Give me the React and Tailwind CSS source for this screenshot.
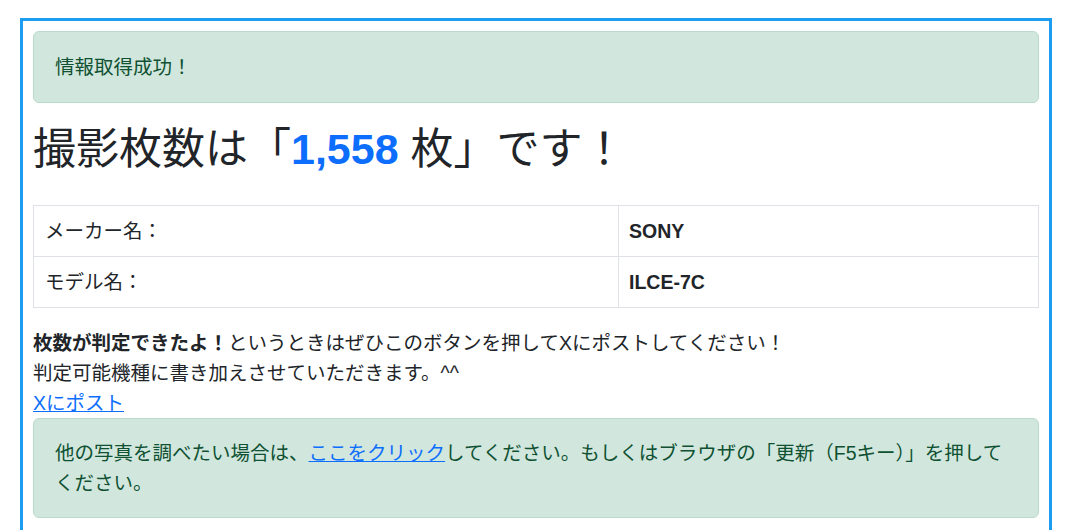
export default function App() {
  const font = { fontFamily: '"Liberation Sans", "Noto Sans CJK JP", sans-serif' };

  return (
    <div className="min-h-[530px] bg-white pl-[20px] pt-[18px] text-[19.5px] leading-[30px] text-[#212529]" style={font}>
      <div className="w-[1032px] border-[3px] border-[#1d9df0] px-[10px] pt-[10px] pb-[40px]">
        {/* success alert */}
        <div className="mb-[20px] rounded-[6px] border border-[#badbcc] bg-[#d1e7dd] px-[21px] py-[20px] text-[#0f5132]">
          情報取得成功！
        </div>

        <h1 className="mb-[29px] text-[43px] font-normal leading-[53px] text-[#212529]">
          撮影枚数は「<span className="font-bold text-[#0d6efd]">1,558</span> 枚」です！
        </h1>

        <table className="mb-[20px] w-full border-collapse border border-[#dee2e6]">
          <tbody>
            <tr>
              <td className="w-[585px] border border-[#dee2e6] px-[11px] py-[10px]">メーカー名：</td>
              <td className="border border-[#dee2e6] px-[10px] py-[10px] font-bold">SONY</td>
            </tr>
            <tr>
              <td className="w-[585px] border border-[#dee2e6] px-[11px] py-[10px]">モデル名：</td>
              <td className="border border-[#dee2e6] px-[10px] py-[10px] font-bold">ILCE-7C</td>
            </tr>
          </tbody>
        </table>

        <div>
          <b>枚数が判定できたよ！</b>というときはぜひこのボタンを押してXにポストしてください！
          <br />
          判定可能機種に書き加えさせていただきます。^^
          <br />
          <a href="#" className="text-[#0d6efd] underline">Xにポスト</a>
        </div>

        <div className="rounded-[6px] border border-[#badbcc] bg-[#d1e7dd] px-[21px] py-[19px] text-[#0f5132]">
          他の写真を調べたい場合は、<a href="#" className="text-[#0d6efd] underline">ここをクリック</a>してください。もしくはブラウザの「更新（F5キー）」を押してください。
        </div>
      </div>
    </div>
  );
}
